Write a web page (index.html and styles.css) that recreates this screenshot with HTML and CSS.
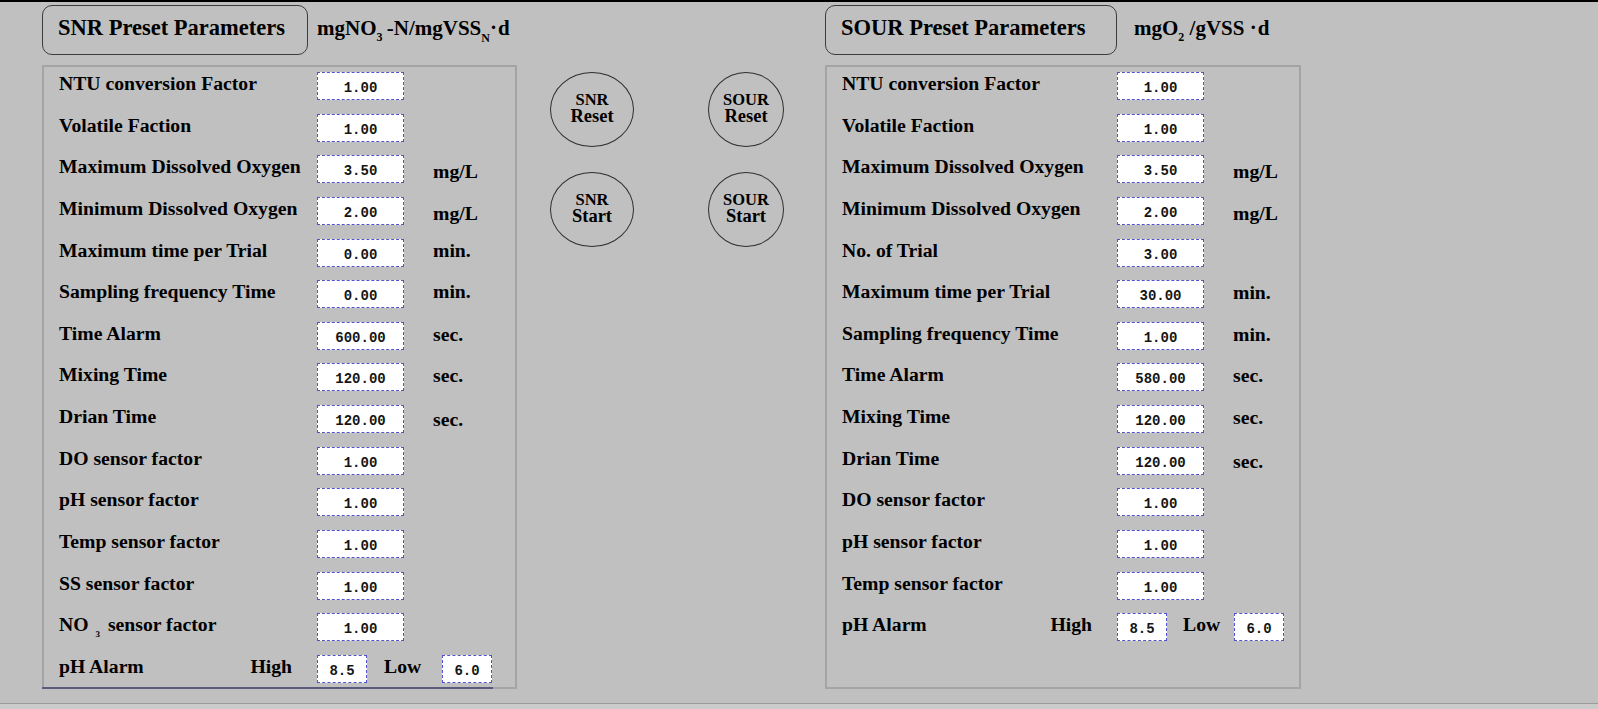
FILE: index.html
```html
<!DOCTYPE html>
<html>
<head>
<meta charset="utf-8">
<title>Preset Parameters</title>
<link rel="stylesheet" href="styles.css">
</head>
<body>
<div class="screen">
  <div class="main">
    <section class="side side-snr">
      <div class="head">
        <div class="title-box">SNR Preset Parameters</div>
        <div class="unit-head">mgNO<span class="hsub hsub-3">3</span> -N/mgVSS<span class="hsub hsub-n">N</span><span class="hdot">·</span>d</div>
      </div>
      <div class="panel panel-snr">
        <div class="row"><span class="lbl">NTU conversion Factor</span><span class="val">1.00</span></div>
        <div class="row"><span class="lbl">Volatile Faction</span><span class="val">1.00</span></div>
        <div class="row"><span class="lbl">Maximum Dissolved Oxygen</span><span class="val">3.50</span><span class="unit u-mg">mg/L</span></div>
        <div class="row"><span class="lbl">Minimum Dissolved Oxygen</span><span class="val">2.00</span><span class="unit u-mg">mg/L</span></div>
        <div class="row"><span class="lbl">Maximum time per Trial</span><span class="val">0.00</span><span class="unit u-min">min.</span></div>
        <div class="row"><span class="lbl">Sampling frequency Time</span><span class="val">0.00</span><span class="unit u-min">min.</span></div>
        <div class="row"><span class="lbl">Time Alarm</span><span class="val">600.00</span><span class="unit u-sec">sec.</span></div>
        <div class="row"><span class="lbl">Mixing Time</span><span class="val">120.00</span><span class="unit u-sec">sec.</span></div>
        <div class="row"><span class="lbl">Drian Time</span><span class="val">120.00</span><span class="unit u-sec2">sec.</span></div>
        <div class="row"><span class="lbl">DO sensor factor</span><span class="val">1.00</span></div>
        <div class="row"><span class="lbl">pH sensor factor</span><span class="val">1.00</span></div>
        <div class="row"><span class="lbl">Temp sensor factor</span><span class="val">1.00</span></div>
        <div class="row"><span class="lbl">SS sensor factor</span><span class="val">1.00</span></div>
        <div class="row"><span class="lbl">NO<span class="lsub">3</span> sensor factor</span><span class="val">1.00</span></div>
        <div class="row"><span class="lbl lbl-alarm"><span>pH Alarm</span><span>High</span></span><span class="val val-sm">8.5</span><span class="low">Low</span><span class="val val-sm">6.0</span></div>
      </div>
    </section>

    <div class="buttons">
      <div class="btn"><span class="l1">SNR</span><span class="l2">Reset</span></div>
      <div class="btn"><span class="l1">SOUR</span><span class="l2">Reset</span></div>
      <div class="btn"><span class="l1">SNR</span><span class="l2">Start</span></div>
      <div class="btn"><span class="l1">SOUR</span><span class="l2">Start</span></div>
    </div>

    <section class="side side-sour">
      <div class="head">
        <div class="title-box">SOUR Preset Parameters</div>
        <div class="unit-head">mgO<span class="hsub hsub-2">2</span> /gVSS <span class="hdot">·</span>d</div>
      </div>
      <div class="panel panel-sour">
        <div class="row"><span class="lbl">NTU conversion Factor</span><span class="val">1.00</span></div>
        <div class="row"><span class="lbl">Volatile Faction</span><span class="val">1.00</span></div>
        <div class="row"><span class="lbl">Maximum Dissolved Oxygen</span><span class="val">3.50</span><span class="unit u-mg">mg/L</span></div>
        <div class="row"><span class="lbl">Minimum Dissolved Oxygen</span><span class="val">2.00</span><span class="unit u-mg">mg/L</span></div>
        <div class="row"><span class="lbl">No. of Trial</span><span class="val">3.00</span></div>
        <div class="row"><span class="lbl">Maximum time per Trial</span><span class="val">30.00</span><span class="unit u-sec">min.</span></div>
        <div class="row"><span class="lbl">Sampling frequency Time</span><span class="val">1.00</span><span class="unit u-sec">min.</span></div>
        <div class="row"><span class="lbl">Time Alarm</span><span class="val">580.00</span><span class="unit u-sec">sec.</span></div>
        <div class="row"><span class="lbl">Mixing Time</span><span class="val">120.00</span><span class="unit u-sec">sec.</span></div>
        <div class="row"><span class="lbl">Drian Time</span><span class="val">120.00</span><span class="unit u-sec2">sec.</span></div>
        <div class="row"><span class="lbl">DO sensor factor</span><span class="val">1.00</span></div>
        <div class="row"><span class="lbl">pH sensor factor</span><span class="val">1.00</span></div>
        <div class="row"><span class="lbl">Temp sensor factor</span><span class="val">1.00</span></div>
        <div class="row"><span class="lbl lbl-alarm"><span>pH Alarm</span><span>High</span></span><span class="val val-sm">8.5</span><span class="low">Low</span><span class="val val-sm">6.0</span></div>
      </div>
    </section>
  </div>
  <div class="footer"></div>
</div>
</body>
</html>
```

FILE: styles.css
```css
html, body {
  margin: 0;
  padding: 0;
}

body {
  background: #c0c0c0;
  font-family: "Liberation Serif", "Times New Roman", serif;
  font-weight: bold;
  color: #000;
}

.screen {
  width: 1598px;
  height: 709px;
  border-top: 2px solid #000;
  box-sizing: border-box;
  display: flex;
  flex-direction: column;
  overflow: hidden;
}

.main {
  flex: 1;
  display: flex;
  align-items: flex-start;
  padding-left: 42px;
}

.footer {
  height: 5px;
  border-top: 1px solid #9c9c9c;
  background: #cbcbcb;
}

/* sections */
.side {
  display: flex;
  flex-direction: column;
}

.side-snr {
  width: 475px;
}

.side-sour {
  width: 476px;
  margin-left: 41px;
}

.head {
  display: flex;
  align-items: flex-start;
  height: 50px;
  margin-top: 3px;
}

.title-box {
  height: 50px;
  box-sizing: border-box;
  border: 1px solid #3c3c3c;
  border-radius: 10px;
  padding-left: 15px;
  font-size: 22.5px;
  line-height: 43px;
  white-space: nowrap;
}

.side-snr .title-box {
  width: 266px;
}

.side-sour .title-box {
  width: 292px;
}

.unit-head {
  font-size: 21px;
  line-height: 43px;
  padding-top: 1px;
  white-space: nowrap;
}

.side-snr .unit-head {
  margin-left: 9px;
}

.side-sour .unit-head {
  margin-left: 17px;
}

.hsub {
  font-size: 12px;
  line-height: 1;
  vertical-align: -6px;
}

.hsub-3 {
  margin-left: 0;
  margin-right: -1px;
}

.hsub-n {
  margin-left: 0;
  vertical-align: -7px;
}

.hsub-2 {
  margin-left: 0;
}

.hdot {
  vertical-align: 1px;
  margin-right: 1px;
}

/* panels */
.panel {
  position: relative;
  margin-top: 10px;
  height: 624px;
  box-sizing: border-box;
  border: 2px solid #a4a4a4;
  padding: 5px 0 0 15px;
}

.panel-snr::after {
  content: "";
  position: absolute;
  left: -2px;
  bottom: -2px;
  width: 451px;
  height: 2px;
  background: #5a5a7c;
}

.row {
  display: flex;
  align-items: flex-start;
  height: 41.65px;
}

.lbl {
  font-size: 19.7px;
  line-height: 20px;
  padding-top: 1px;
  white-space: nowrap;
  flex-shrink: 0;
}

.side-snr .lbl {
  width: 258px;
}

.side-sour .lbl {
  width: 275px;
}

.lbl-alarm {
  display: flex;
  justify-content: space-between;
  padding-right: 25px;
  box-sizing: border-box;
}

.lsub {
  font-size: 9px;
  line-height: 1;
  vertical-align: -6px;
  margin-left: 7px;
  margin-right: 3px;
}

.val {
  width: 87px;
  height: 28px;
  box-sizing: border-box;
  flex-shrink: 0;
  border: 1px dashed #5252d2;
  background: #fff;
  font-family: "Liberation Mono", "Courier New", monospace;
  font-size: 14px;
  font-weight: bold;
  color: #151515;
  text-align: center;
  line-height: 20px;
  padding-top: 5px;
}

.val-sm {
  width: 50px;
}

.unit {
  margin-left: 29px;
  font-size: 19.7px;
  line-height: 20px;
  padding-top: 1px;
  white-space: nowrap;
}

.u-mg {
  padding-top: 6px;
}

.u-min {
  padding-top: 1px;
}

.u-sec {
  padding-top: 2px;
}

.u-sec2 {
  padding-top: 4px;
}

.low {
  font-size: 19.7px;
  line-height: 20px;
  padding-top: 1px;
  flex-shrink: 0;
}

.side-snr .low {
  margin-left: 17px;
  width: 58px;
}

.side-sour .low {
  margin-left: 16px;
  width: 51px;
}

/* round buttons */
.buttons {
  margin-left: 33px;
  margin-top: 70px;
  display: grid;
  grid-template-columns: 84px 76px;
  grid-auto-rows: 75px;
  column-gap: 74px;
  row-gap: 25px;
}

.btn {
  box-sizing: border-box;
  border: 1px solid #2e2e2e;
  border-radius: 50%;
  display: flex;
  flex-direction: column;
  align-items: center;
  justify-content: center;
  padding-bottom: 3px;
}

.l1 {
  font-size: 16.5px;
  line-height: 17px;
}

.l2 {
  font-size: 18.5px;
  line-height: 17px;
}
```
